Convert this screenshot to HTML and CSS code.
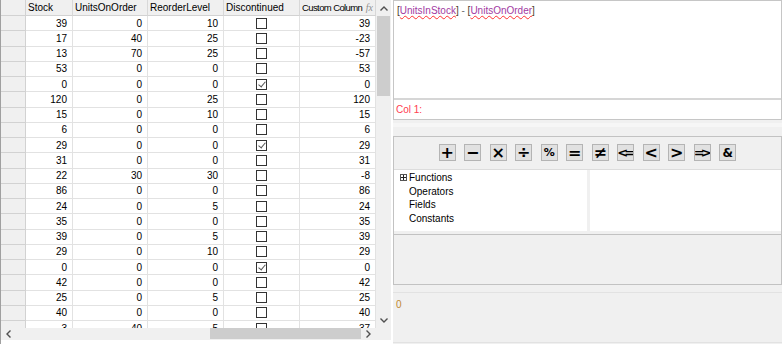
FILE: index.html
```html
<!DOCTYPE html>
<html lang="en">
<head>
  <meta charset="UTF-8">
  <title>Expression Editor</title>
  <link rel="stylesheet" href="styles.css">
</head>
<body>

<div class="app">

  <div class="grid-pane">
    <div class="grid-body">
      <div class="table">
        <div class="row head">
          <div class="rh"></div>
          <div class="c">Stock</div>
          <div class="c">UnitsOnOrder</div>
          <div class="c">ReorderLevel</div>
          <div class="c">Discontinued</div>
          <div class="c custom"><span class="cap">Custom Column</span><i class="fx">fx</i></div>
        </div>
        <div class="row"><div class="rh"></div><div class="c n">39</div><div class="c n">0</div><div class="c n">10</div><div class="c ck"><span class="cb"></span></div><div class="c n">39</div></div>
        <div class="row"><div class="rh"></div><div class="c n">17</div><div class="c n">40</div><div class="c n">25</div><div class="c ck"><span class="cb"></span></div><div class="c n">-23</div></div>
        <div class="row"><div class="rh"></div><div class="c n">13</div><div class="c n">70</div><div class="c n">25</div><div class="c ck"><span class="cb"></span></div><div class="c n">-57</div></div>
        <div class="row"><div class="rh"></div><div class="c n">53</div><div class="c n">0</div><div class="c n">0</div><div class="c ck"><span class="cb"></span></div><div class="c n">53</div></div>
        <div class="row"><div class="rh"></div><div class="c n">0</div><div class="c n">0</div><div class="c n">0</div><div class="c ck"><span class="cb on"></span></div><div class="c n">0</div></div>
        <div class="row"><div class="rh"></div><div class="c n">120</div><div class="c n">0</div><div class="c n">25</div><div class="c ck"><span class="cb"></span></div><div class="c n">120</div></div>
        <div class="row"><div class="rh"></div><div class="c n">15</div><div class="c n">0</div><div class="c n">10</div><div class="c ck"><span class="cb"></span></div><div class="c n">15</div></div>
        <div class="row"><div class="rh"></div><div class="c n">6</div><div class="c n">0</div><div class="c n">0</div><div class="c ck"><span class="cb"></span></div><div class="c n">6</div></div>
        <div class="row"><div class="rh"></div><div class="c n">29</div><div class="c n">0</div><div class="c n">0</div><div class="c ck"><span class="cb on"></span></div><div class="c n">29</div></div>
        <div class="row"><div class="rh"></div><div class="c n">31</div><div class="c n">0</div><div class="c n">0</div><div class="c ck"><span class="cb"></span></div><div class="c n">31</div></div>
        <div class="row"><div class="rh"></div><div class="c n">22</div><div class="c n">30</div><div class="c n">30</div><div class="c ck"><span class="cb"></span></div><div class="c n">-8</div></div>
        <div class="row"><div class="rh"></div><div class="c n">86</div><div class="c n">0</div><div class="c n">0</div><div class="c ck"><span class="cb"></span></div><div class="c n">86</div></div>
        <div class="row"><div class="rh"></div><div class="c n">24</div><div class="c n">0</div><div class="c n">5</div><div class="c ck"><span class="cb"></span></div><div class="c n">24</div></div>
        <div class="row"><div class="rh"></div><div class="c n">35</div><div class="c n">0</div><div class="c n">0</div><div class="c ck"><span class="cb"></span></div><div class="c n">35</div></div>
        <div class="row"><div class="rh"></div><div class="c n">39</div><div class="c n">0</div><div class="c n">5</div><div class="c ck"><span class="cb"></span></div><div class="c n">39</div></div>
        <div class="row"><div class="rh"></div><div class="c n">29</div><div class="c n">0</div><div class="c n">10</div><div class="c ck"><span class="cb"></span></div><div class="c n">29</div></div>
        <div class="row"><div class="rh"></div><div class="c n">0</div><div class="c n">0</div><div class="c n">0</div><div class="c ck"><span class="cb on"></span></div><div class="c n">0</div></div>
        <div class="row"><div class="rh"></div><div class="c n">42</div><div class="c n">0</div><div class="c n">0</div><div class="c ck"><span class="cb"></span></div><div class="c n">42</div></div>
        <div class="row"><div class="rh"></div><div class="c n">25</div><div class="c n">0</div><div class="c n">5</div><div class="c ck"><span class="cb"></span></div><div class="c n">25</div></div>
        <div class="row"><div class="rh"></div><div class="c n">40</div><div class="c n">0</div><div class="c n">0</div><div class="c ck"><span class="cb"></span></div><div class="c n">40</div></div>
        <div class="row"><div class="rh"></div><div class="c n">3</div><div class="c n">40</div><div class="c n">5</div><div class="c ck"><span class="cb"></span></div><div class="c n">-37</div></div>
      </div>

      <div class="vscroll">
        <div class="sb-btn"><svg width="8" height="5" viewBox="0 0 8 5"><polyline points="0.5,4.5 4,1 7.5,4.5" fill="none" stroke="#505050" stroke-width="1.4"/></svg></div>
        <div class="sb-thumb"></div>
        <div class="sb-track"></div>
        <div class="sb-btn"><svg width="8" height="5" viewBox="0 0 8 5"><polyline points="0.5,0.5 4,4 7.5,0.5" fill="none" stroke="#505050" stroke-width="1.4"/></svg></div>
      </div>
    </div>

    <div class="hscroll">
      <div class="sb-btn h"><svg width="5" height="8" viewBox="0 0 5 8"><polyline points="4.5,0.5 1,4 4.5,7.5" fill="none" stroke="#505050" stroke-width="1.4"/></svg></div>
      <div class="sb-track h"></div>
      <div class="sb-thumb h"></div>
      <div class="sb-btn h"><svg width="5" height="8" viewBox="0 0 5 8"><polyline points="0.5,0.5 4,4 0.5,7.5" fill="none" stroke="#505050" stroke-width="1.4"/></svg></div>
      <div class="corner"></div>
    </div>
  </div>

  <div class="editor">
    <div class="expr">
      <div class="expr-text">
        <span class="br">[</span><span class="field">UnitsInStock</span><span class="br">]</span><span class="op"> - </span><span class="br">[</span><span class="field">UnitsOnOrder</span><span class="br">]</span>
      </div>
      <div class="status">Col 1:</div>
    </div>

    <div class="split"></div>

    <div class="ops">
      <div class="toolbar">
        <button class="opb">+</button>
        <button class="opb">&minus;</button>
        <button class="opb">&times;</button>
        <button class="opb">&divide;</button>
        <button class="opb pct">%</button>
        <button class="opb">=</button>
        <button class="opb">&ne;</button>
        <button class="opb tight">&lt;=</button>
        <button class="opb">&lt;</button>
        <button class="opb">&gt;</button>
        <button class="opb tight">=&gt;</button>
        <button class="opb amp">&amp;</button>
      </div>
      <div class="lists">
        <ul class="tree">
          <li><span class="plus"></span>Functions</li>
          <li>Operators</li>
          <li>Fields</li>
          <li>Constants</li>
        </ul>
        <div class="items"></div>
      </div>
      <div class="desc"></div>
    </div>

    <div class="result">0</div>
  </div>

</div>

</body>
</html>
```

FILE: styles.css
```css
body {
  margin: 0;
  background: #ffffff;
  font-family: "Liberation Sans Narrow", "Liberation Sans", Arial, sans-serif;
  font-size: 10px;
  color: #000;
}
.app {
  display: flex;
  width: 784px;
  height: 344px;
  overflow: hidden;
}

/* data grid */
.grid-pane {
  width: 391px;
  display: flex;
  flex-direction: column;
  border-left: 1px solid #a0a0a0;
  box-sizing: border-box;
}
.grid-body {
  display: flex;
  height: 328px;
}
.table {
  width: 375px;
  height: 328px;
  overflow: hidden;
}
.row {
  display: grid;
  grid-template-columns: 25px 47px 75px 76px 76px 76px;
  height: 15.25px;
}
.row.head {
  height: 16px;
}
.c, .rh {
  box-sizing: border-box;
  border-right: 1px solid #e2e2e2;
  border-bottom: 1px solid #e2e2e2;
  display: flex;
  align-items: center;
  overflow: hidden;
  white-space: nowrap;
}
.rh {
  background: #f0f0f0;
  border-right-color: #d2d2d2;
  border-bottom-color: #d2d2d2;
}
.head .c {
  background: #f0f0f0;
  border-right-color: #d8d8d8;
  border-bottom-color: #d2d2d2;
  padding-left: 2px;
}
.head .custom {
  padding-right: 2px;
}
.cap {
  flex: 1;
  min-width: 0;
  overflow: hidden;
  font-size: 9.5px;
  letter-spacing: -0.6px;
}
.fx {
  flex-shrink: 0;
  margin-left: 1px;
  font-family: "Liberation Serif", serif;
  font-size: 10px;
  color: #909090;
}
.n {
  justify-content: flex-end;
  padding-right: 5px;
}
.ck {
  justify-content: center;
}
.cb {
  width: 11px;
  height: 11px;
  box-sizing: border-box;
  border: 1px solid #333;
  background: #fff;
  position: relative;
}
.cb.on::after {
  content: "";
  position: absolute;
  left: 3px;
  top: 0px;
  width: 3px;
  height: 6px;
  border-right: 1px solid #555;
  border-bottom: 1px solid #555;
  transform: rotate(40deg);
}

/* scrollbars */
.vscroll {
  width: 15px;
  background: #f0f0f0;
  display: flex;
  flex-direction: column;
}
.sb-btn {
  height: 16px;
  display: flex;
  align-items: center;
  justify-content: center;
}
.sb-thumb {
  height: 80px;
  margin: 0 1px;
  background: #cdcdcd;
}
.sb-track {
  flex: 1;
}
.hscroll {
  height: 12px;
  display: flex;
  background: #f0f0f0;
}
.sb-btn.h {
  width: 15px;
  height: 12px;
}
.sb-track.h {
  width: 194px;
  flex: none;
}
.sb-thumb.h {
  width: 151px;
  height: 11px;
  margin: 0;
}
.corner {
  width: 15px;
  background: #f0f0f0;
}

/* expression editor */
.editor {
  width: 389px;
  margin-left: 2px;
  background: #f0f0f0;
  display: flex;
  flex-direction: column;
}
.expr {
  height: 120px;
  background: #fff;
  border: 1px solid #c6c6c6;
  box-sizing: border-box;
  display: flex;
  flex-direction: column;
}
.expr-text {
  height: 99px;
  padding: 4px 3px;
  box-sizing: border-box;
  border-bottom: 2px solid #d6d6d6;
}
.br {
  color: #4a3a2a;
}
.field {
  color: #a23aa2;
  text-decoration: underline wavy #ff3030;
  text-decoration-thickness: 1px;
  text-underline-offset: 1px;
}
.op {
  color: #707070;
}
.status {
  flex: 1;
  display: flex;
  align-items: center;
  padding-left: 2px;
  color: #ff4050;
}
.split {
  height: 16px;
  box-sizing: border-box;
  border-top: 3px solid #f0f0f0;
  border-bottom: 9px solid #f0f0f0;
  background: #f6f6f6;
}
.ops {
  height: 149px;
  border: 1px solid #c2c2c2;
  box-sizing: border-box;
  display: flex;
  flex-direction: column;
}
.toolbar {
  height: 33px;
  border-bottom: 1px solid #dcdcdc;
  box-sizing: border-box;
  display: flex;
  align-items: center;
  justify-content: center;
  gap: 8.5px;
  padding-bottom: 1px;
}
.opb {
  width: 17px;
  height: 17px;
  padding: 0;
  background: #e1e1e1;
  border: 1px solid #b4b4b4;
  font-family: "DejaVu Sans", sans-serif;
  font-size: 16px;
  font-weight: bold;
  line-height: 14px;
  color: #000;
  overflow: hidden;
}
.opb.tight {
  letter-spacing: -4px;
  font-size: 13px;
  text-indent: -3px;
}
.opb.pct {
  font-size: 11px;
}
.opb.amp {
  font-size: 12px;
}
.lists {
  height: 61px;
  display: flex;
  gap: 3px;
}
.tree {
  width: 193px;
  margin: 0;
  padding: 1px 0 0 15px;
  list-style: none;
  background: #fff;
  box-sizing: border-box;
}
.tree li {
  height: 13.5px;
  line-height: 13.5px;
  position: relative;
}
.plus {
  position: absolute;
  left: -9px;
  top: 3px;
  width: 7px;
  height: 7px;
  box-sizing: border-box;
  border: 1px solid #555;
  background:
    linear-gradient(#222, #222) center / 5px 1px no-repeat,
    linear-gradient(#222, #222) center / 1px 5px no-repeat;
}
.items {
  flex: 1;
  background: #fff;
}
.desc {
  flex: 1;
  margin-top: 3px;
  border-top: 1px solid #c2c2c2;
}
.result {
  height: 51px;
  margin-top: 7px;
  border-top: 1px solid #e2e2e2;
  border-bottom: 1px solid #e2e2e2;
  padding: 6px 3px;
  box-sizing: border-box;
  color: #c08a30;
}
```
